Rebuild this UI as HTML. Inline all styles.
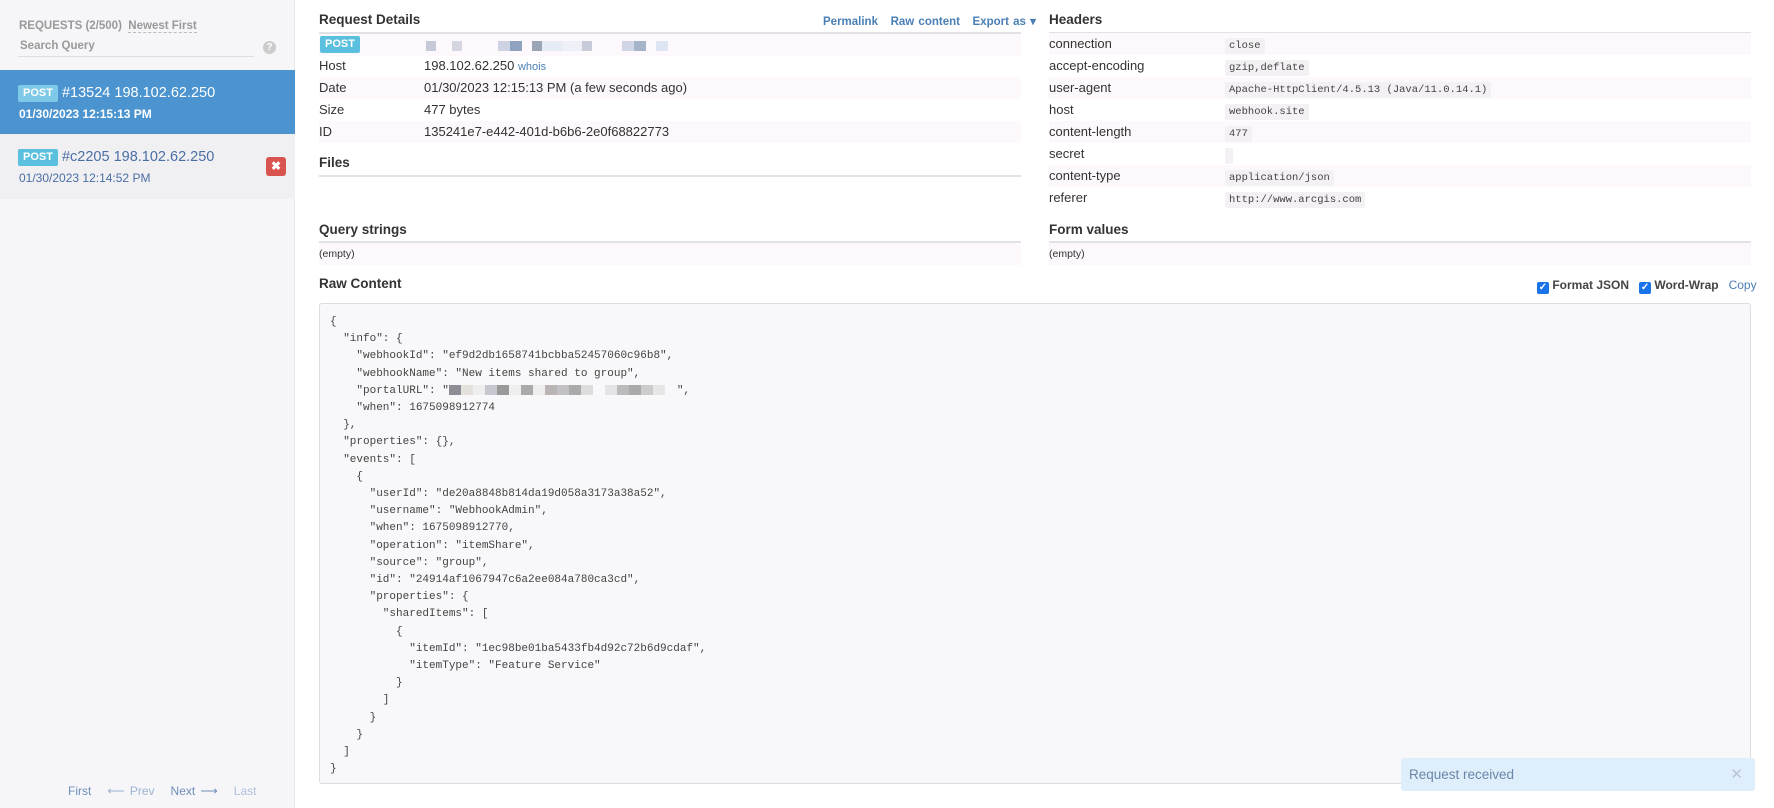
<!DOCTYPE html>
<html><head><meta charset="utf-8">
<style>
*{margin:0;padding:0;box-sizing:border-box}
body{width:1774px;height:808px;overflow:hidden;background:#fff;font-family:"Liberation Sans",sans-serif;font-size:13px;color:#333;position:relative}
.a{position:absolute}
#side{left:0;top:0;width:295px;height:808px;background:#f6f5f8;border-right:1px solid #e8e8ec}
.lbl{color:#999;font-size:11.5px;font-weight:bold}
.post{display:inline-block;background:#5bc0de;color:#fff;font-size:11px;line-height:13px;font-weight:bold;padding:2px 5px;border-radius:2px;vertical-align:1px}
h4{position:absolute;font-size:13.5px;font-weight:bold;color:#333}
.line{position:absolute;height:2px;background:#e2e2e6}
.row{position:absolute;height:22px;line-height:22px;font-size:13px}
.pk{background:#fcf8fb}
code{font-family:"Liberation Mono",monospace;font-size:10.5px;background:#f3f1f3;padding:2px 4px;border-radius:2px;color:#444}
pre{font-family:"Liberation Mono",monospace;font-size:11px;line-height:17.2px;color:#444}
.blur{display:inline-block;height:10px;vertical-align:middle}
a{color:#4a7fb5;text-decoration:none}
</style></head><body>
<div id="side" class="a">
 <div class="a lbl" style="left:19px;top:20px">REQUESTS (2/500) &nbsp;<span style="border-bottom:1px dashed #bbb;color:#999">Newest First</span></div>
 <div class="a lbl" style="left:20px;top:40px;color:#999;font-size:11.5px;font-weight:bold">Search Query</div>
 <div class="a" style="left:18px;top:56px;width:236px;height:1px;background:#ddd"></div>
 <div class="a" style="left:263px;top:41px;width:13px;height:13px;border-radius:50%;background:#ccc;color:#fff;font-size:10px;text-align:center;line-height:13px;font-weight:bold">?</div>
 <div class="a" style="left:0;top:70px;width:295px;height:64px;background:#4b94cf;color:#fff">
  <div class="a" style="left:18px;top:15px;font-size:14.5px"><span class="post" style="background:#7ec8e8">POST</span> #13524 198.102.62.250</div>
  <div class="a" style="left:19px;top:37px;font-size:12px;font-weight:bold">01/30/2023 12:15:13 PM</div>
 </div>
 <div class="a" style="left:0;top:134px;width:295px;height:65px;background:#f0eff2">
  <div class="a" style="left:18px;top:15px;font-size:14.5px;color:#4a6fa5"><span class="post">POST</span> #c2205 198.102.62.250</div>
  <div class="a" style="left:19px;top:37px;font-size:12px;color:#4a6fa5">01/30/2023 12:14:52 PM</div>
  <div class="a" style="left:266px;top:23px;width:20px;height:19px;background:#d9534f;border-radius:3px;color:#fff;font-size:12px;text-align:center;line-height:19px;font-weight:bold">✖</div>
 </div>
 <div class="a" style="left:68px;top:784px;font-size:12px;color:#6d8fb8;word-spacing:2px">First &nbsp; <span style="color:#9bb4d2">⟵ Prev</span> &nbsp; Next ⟶ &nbsp; <span style="color:#aec2dc">Last</span></div>
</div>

<h4 style="left:319px;top:12px">Request Details</h4>
<div class="a" style="left:823px;top:14px;font-size:11.5px;font-weight:bold;word-spacing:1px"><a>Permalink</a> &nbsp; <a>Raw content</a> &nbsp; <a>Export as ▾</a></div>
<div class="line" style="left:319px;top:32px;width:702px"></div>
<div class="row pk" style="left:319px;top:34px;width:702px"><span class="post" style="margin-left:1px;vertical-align:2px">POST</span>
 <span class="a" style="left:107px;top:0px"><span class="blur" style="width:10px;background:#c6cad8"></span><span class="blur" style="width:16px"></span><span class="blur" style="width:10px;background:#d4d6e2"></span><span class="blur" style="width:36px"></span><span class="blur" style="width:12px;background:#cdd3e3"></span><span class="blur" style="width:12px;background:#8fa3c0"></span><span class="blur" style="width:10px"></span><span class="blur" style="width:10px;background:#9aa5b5"></span><span class="blur" style="width:20px;background:#e6ecf6"></span><span class="blur" style="width:20px;background:#eef0f8"></span><span class="blur" style="width:10px;background:#c8ccd8"></span><span class="blur" style="width:30px"></span><span class="blur" style="width:12px;background:#d0d6e6"></span><span class="blur" style="width:12px;background:#a6b4ca"></span><span class="blur" style="width:10px"></span><span class="blur" style="width:12px;background:#dfe6f3"></span></span></div>
<div class="row" style="left:319px;top:55px;width:702px">Host<span class="a" style="left:105px">198.102.62.250 <a style="font-size:11px">whois</a></span></div>
<div class="row pk" style="left:319px;top:77px;width:702px">Date<span class="a" style="left:105px">01/30/2023 12:15:13 PM (a few seconds ago)</span></div>
<div class="row" style="left:319px;top:99px;width:702px">Size<span class="a" style="left:105px">477 bytes</span></div>
<div class="row pk" style="left:319px;top:121px;width:702px">ID<span class="a" style="left:105px">135241e7-e442-401d-b6b6-2e0f68822773</span></div>
<h4 style="left:319px;top:155px">Files</h4>
<div class="line" style="left:319px;top:175px;width:702px"></div>
<h4 style="left:319px;top:222px">Query strings</h4>
<div class="line" style="left:319px;top:241px;width:702px"></div>
<div class="row pk" style="left:319px;top:243px;width:702px;font-size:10.5px">(empty)</div>

<h4 style="left:1049px;top:12px">Headers</h4>
<div class="line" style="left:1049px;top:32px;width:702px"></div>
<div class="row pk" style="left:1049px;top:33px;width:702px">connection<span class="a" style="left:176px"><code>close</code></span></div>
<div class="row" style="left:1049px;top:55px;width:702px">accept-encoding<span class="a" style="left:176px"><code>gzip,deflate</code></span></div>
<div class="row pk" style="left:1049px;top:77px;width:702px">user-agent<span class="a" style="left:176px"><code>Apache-HttpClient/4.5.13 (Java/11.0.14.1)</code></span></div>
<div class="row" style="left:1049px;top:99px;width:702px">host<span class="a" style="left:176px"><code>webhook.site</code></span></div>
<div class="row pk" style="left:1049px;top:121px;width:702px">content-length<span class="a" style="left:176px"><code>477</code></span></div>
<div class="row" style="left:1049px;top:143px;width:702px">secret<span class="a" style="left:176px"><code></code></span></div>
<div class="row pk" style="left:1049px;top:165px;width:702px">content-type<span class="a" style="left:176px"><code>application/json</code></span></div>
<div class="row" style="left:1049px;top:187px;width:702px">referer<span class="a" style="left:176px"><code>http://www.arcgis.com</code></span></div>
<h4 style="left:1049px;top:222px">Form values</h4>
<div class="line" style="left:1049px;top:241px;width:702px"></div>
<div class="row pk" style="left:1049px;top:243px;width:702px;font-size:10.5px">(empty)</div>

<h4 style="left:319px;top:276px">Raw Content</h4>
<div class="a" style="left:1537px;top:278px;font-size:12px;font-weight:bold;color:#444">
<span style="display:inline-block;width:12px;height:12px;background:#1a73e8;border-radius:2px;color:#fff;font-size:10px;line-height:12px;text-align:center;vertical-align:-1px">✓</span> Format JSON &nbsp;
<span style="display:inline-block;width:12px;height:12px;background:#1a73e8;border-radius:2px;color:#fff;font-size:10px;line-height:12px;text-align:center;vertical-align:-1px">✓</span> Word-Wrap &nbsp; <a style="font-weight:normal">Copy</a></div>
<div class="a" style="left:319px;top:303px;width:1432px;height:481px;background:#f8f7f9;border:1px solid #ddd;border-radius:3px">
<pre class="a" style="left:10px;top:10px">{
  "info": {
    "webhookId": "ef9d2db1658741bcbba52457060c96b8",
    "webhookName": "New items shared to group",
    "portalURL": "<span class="blur" style="width:12px;background:#8e8c94"></span><span class="blur" style="width:12px;background:#e4e0dc"></span><span class="blur" style="width:12px;background:#eee"></span><span class="blur" style="width:12px;background:#c7c7d0"></span><span class="blur" style="width:12px;background:#999"></span><span class="blur" style="width:12px;background:#eee"></span><span class="blur" style="width:12px;background:#aaa"></span><span class="blur" style="width:12px;background:#eee"></span><span class="blur" style="width:12px;background:#bbb4b4"></span><span class="blur" style="width:12px;background:#c2c0c4"></span><span class="blur" style="width:12px;background:#aaa"></span><span class="blur" style="width:12px;background:#ddd"></span><span class="blur" style="width:12px"></span><span class="blur" style="width:12px;background:#e4e4e8"></span><span class="blur" style="width:12px;background:#bbb"></span><span class="blur" style="width:12px;background:#aaa"></span><span class="blur" style="width:12px;background:#ccc"></span><span class="blur" style="width:12px;background:#e6e6e6"></span><span class="blur" style="width:12px"></span>",
    "when": 1675098912774
  },
  "properties": {},
  "events": [
    {
      "userId": "de20a8848b814da19d058a3173a38a52",
      "username": "WebhookAdmin",
      "when": 1675098912770,
      "operation": "itemShare",
      "source": "group",
      "id": "24914af1067947c6a2ee084a780ca3cd",
      "properties": {
        "sharedItems": [
          {
            "itemId": "1ec98be01ba5433fb4d92c72b6d9cdaf",
            "itemType": "Feature Service"
          }
        ]
      }
    }
  ]
}</pre>
</div>
<div class="a" style="left:1401px;top:758px;width:354px;height:33px;background:#dfeefb;border-radius:3px;color:#6b86a8;font-size:13.5px;line-height:33px;padding-left:8px">Request received<span class="a" style="right:12px;top:0;color:#b8c6d4;font-size:15px">✕</span></div>
</body></html>
